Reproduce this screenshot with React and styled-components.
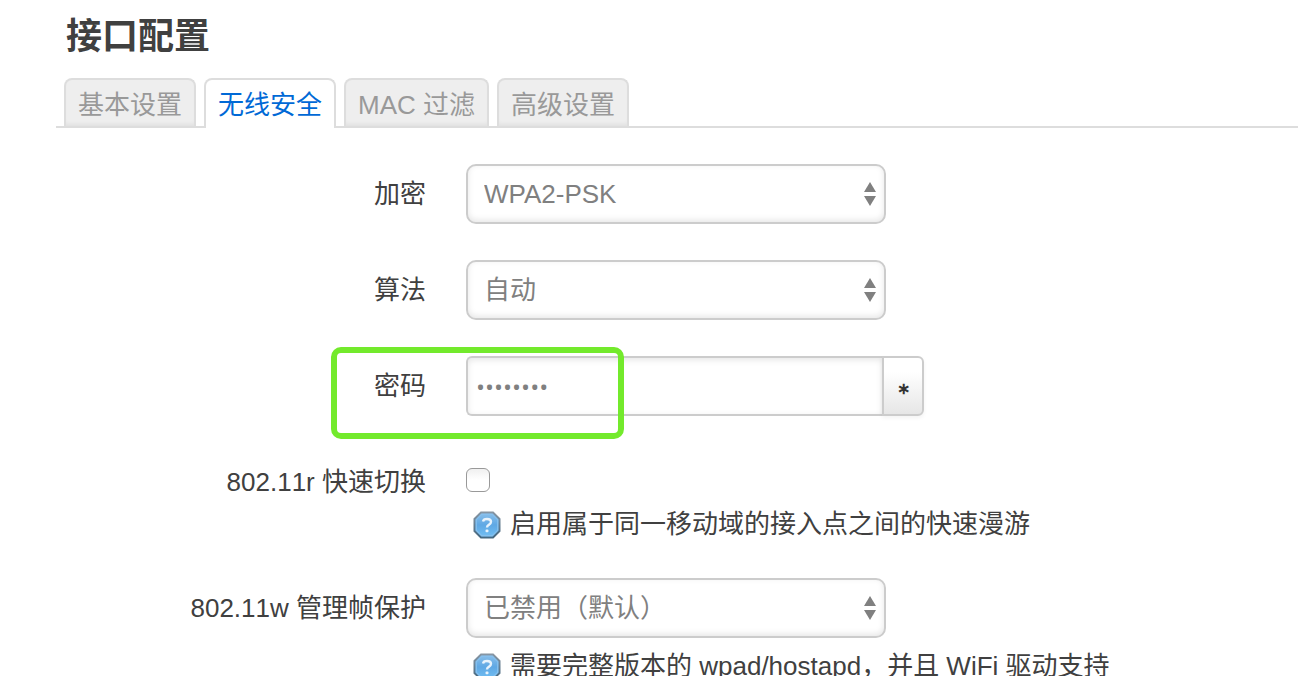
import React, { useState } from "react";
import styled, { createGlobalStyle, css } from "styled-components";

const GlobalStyle = createGlobalStyle`
  * { box-sizing: border-box; }
  body {
    margin: 0;
    background: #fff;
    color: #404040;
    font: 26px/36px "Liberation Sans", "Noto Sans CJK SC", sans-serif;
  }
  button, input, select { font: inherit; margin: 0; }
`;

const Page = styled.main`
  height: 100vh;
  overflow: hidden;
  padding: 11px 0 0 56px;
`;

const Title = styled.h3`
  margin: 0;
  padding-left: 10px;
  font-size: 36px;
  line-height: 52px;
  font-weight: bold;
`;

const TabBar = styled.nav`
  display: flex;
  gap: 8px;
  margin: 15px 0 36px;
  padding-left: 8px;
  border-bottom: 2px solid #ddd;
`;

const Tab = styled.a`
  height: 48px;
  padding: 7px 12px 0;
  border: 2px solid #ddd;
  border-bottom: 0;
  border-radius: 8px 8px 0 0;
  background: #eee;
  box-shadow: inset 0 -4px 4px -2px rgba(0, 0, 0, 0.06);
  color: #999;
  text-decoration: none;
  white-space: nowrap;
  font-kerning: none;
  ${({ $active }) =>
    $active &&
    css`
      height: 50px;
      margin-bottom: -2px;
      background: #fff;
      box-shadow: none;
      color: #0069d6;
    `}
`;

const Form = styled.form`
  display: flex;
  flex-direction: column;
  gap: 36px;
`;

const Row = styled.div`
  position: relative;
  display: grid;
  grid-template-columns: 370px minmax(0, 1fr);
  column-gap: 40px;
`;

const Label = styled.label`
  justify-self: end;
  align-self: start;
  padding-top: 12px;
  white-space: nowrap;
  font-kerning: none;
`;

const SelectBox = styled.div`
  position: relative;
  width: 420px;
  max-width: 100%;
`;

const Select = styled.select`
  display: block;
  width: 100%;
  height: 60px;
  padding: 0 40px 0 16px;
  border: 2px solid #ccc;
  border-radius: 10px;
  appearance: none;
  background: #fff;
  box-shadow: inset 0 -2px 6px rgba(0, 0, 0, 0.1);
  color: #808080;
`;

const Arrows = styled.svg`
  position: absolute;
  top: 18px;
  right: 10px;
  pointer-events: none;
`;

const PasswordGroup = styled.div`
  display: flex;
  width: 458px;
  max-width: 100%;
`;

const PasswordInput = styled.input`
  flex: 1;
  min-width: 0;
  height: 60px;
  padding: 0 8px;
  border: 2px solid #ccc;
  border-right: 0;
  border-radius: 6px 0 0 6px;
  background: #fff;
  box-shadow: inset 0 2px 6px rgba(0, 0, 0, 0.1);
  color: #808080;
  &[type="password"] {
    font-family: "Open Sans", sans-serif;
    font-size: 24px;
  }
`;

const RevealButton = styled.button`
  width: 42px;
  height: 60px;
  padding: 6px 0 0;
  border: 2px solid #ccc;
  border-radius: 0 6px 6px 0;
  background: linear-gradient(#fff, #fff 25%, #e6e6e6);
  box-shadow: 0 2px 4px rgba(0, 0, 0, 0.05);
  color: #333;
  font-size: 16px;
  font-weight: bold;
`;

const Checkbox = styled.input`
  display: block;
  width: 24px;
  height: 24px;
  && { margin: 16px 0 14px; }
  border: 1px solid #999;
  border-radius: 6px;
  appearance: none;
  background: linear-gradient(#f0f0f0, #fff 50%);
  &:checked { background: #0069d6; }
`;

const Help = styled.div`
  display: flex;
  gap: 9px;
  padding-left: 7px;
  margin-top: ${({ $spaced }) => ($spaced ? "10px" : "0")};
  white-space: nowrap;
  font-kerning: none;
`;

const HelpSvg = styled.svg`
  flex: none;
  margin-top: 5px;
`;

const Highlight = styled.div`
  position: absolute;
  top: -9px;
  left: 275px;
  width: 293px;
  height: 92px;
  border: 6px solid #73ea2c;
  border-radius: 10px;
  pointer-events: none;
`;

function HelpIcon() {
  return (
    <HelpSvg width="28" height="28" viewBox="0 0 28 28" aria-hidden="true">
      <defs>
        <linearGradient id="helpFill" x1="0" y1="0" x2="0" y2="1">
          <stop offset="0" stopColor="#8cc0ea" />
          <stop offset="0.5" stopColor="#5fa8e4" />
          <stop offset="1" stopColor="#72c0f4" />
        </linearGradient>
        <linearGradient id="helpEdge" x1="0" y1="0" x2="0" y2="1">
          <stop offset="0" stopColor="#8695a3" />
          <stop offset="1" stopColor="#45677f" />
        </linearGradient>
      </defs>
      <path d="M8 1.5H20L26.5 8V20L20 26.5H8L1.5 20V8Z" fill="url(#helpFill)" stroke="url(#helpEdge)" strokeWidth="2" />
      <path d="M8.7 3.3H19.3L24.7 8.7V19.3L19.3 24.7H8.7L3.3 19.3V8.7Z" fill="none" stroke="#86c0ee" strokeWidth="1.2" />
      <path d="M10 10.4Q10.5 8 14 8Q18 8 18 10.8Q18 12.6 16.1 13.6Q14 14.7 14 16.4" fill="none" stroke="#e8f3fc" strokeWidth="2.4" />
      <rect x="12.5" y="18.6" width="3" height="2.6" rx="1" fill="#e8f3fc" />
    </HelpSvg>
  );
}

function SelectField({ id, options }) {
  return (
    <SelectBox>
      <Select id={id}>
        {options.map((o) => (
          <option key={o}>{o}</option>
        ))}
      </Select>
      <Arrows width="12" height="24" viewBox="0 0 12 24" fill="#808080" aria-hidden="true">
        <path d="M6 0L12 10H0Z" />
        <path d="M0 14H12L6 24Z" />
      </Arrows>
    </SelectBox>
  );
}

const tabs = ["基本设置", "无线安全", "MAC 过滤", "高级设置"];

export default function App() {
  const [active, setActive] = useState(1);
  const [visible, setVisible] = useState(false);
  return (
    <>
      <GlobalStyle />
      <Page>
        <Title>接口配置</Title>
        <TabBar>
          {tabs.map((name, i) => (
            <Tab key={name} href="#" $active={i === active} onClick={() => setActive(i)}>
              {name}
            </Tab>
          ))}
        </TabBar>
        <Form>
          <Row>
            <Label htmlFor="encryption">加密</Label>
            <SelectField id="encryption" options={["WPA2-PSK"]} />
          </Row>
          <Row>
            <Label htmlFor="cipher">算法</Label>
            <SelectField id="cipher" options={["自动"]} />
          </Row>
          <Row>
            <Label htmlFor="key">密码</Label>
            <PasswordGroup>
              <PasswordInput id="key" type={visible ? "text" : "password"} defaultValue="12345678" />
              <RevealButton type="button" onClick={() => setVisible(!visible)}>
                ∗
              </RevealButton>
            </PasswordGroup>
            <Highlight />
          </Row>
          <Row>
            <Label htmlFor="roaming">802.11r 快速切换</Label>
            <div>
              <Checkbox id="roaming" type="checkbox" />
              <Help>
                <HelpIcon />
                <span>启用属于同一移动域的接入点之间的快速漫游</span>
              </Help>
            </div>
          </Row>
          <Row>
            <Label htmlFor="mfp">802.11w 管理帧保护</Label>
            <div>
              <SelectField id="mfp" options={["已禁用（默认）"]} />
              <Help $spaced>
                <HelpIcon />
                <span>需要完整版本的 wpad/hostapd，并且 WiFi 驱动支持</span>
              </Help>
            </div>
          </Row>
        </Form>
      </Page>
    </>
  );
}
